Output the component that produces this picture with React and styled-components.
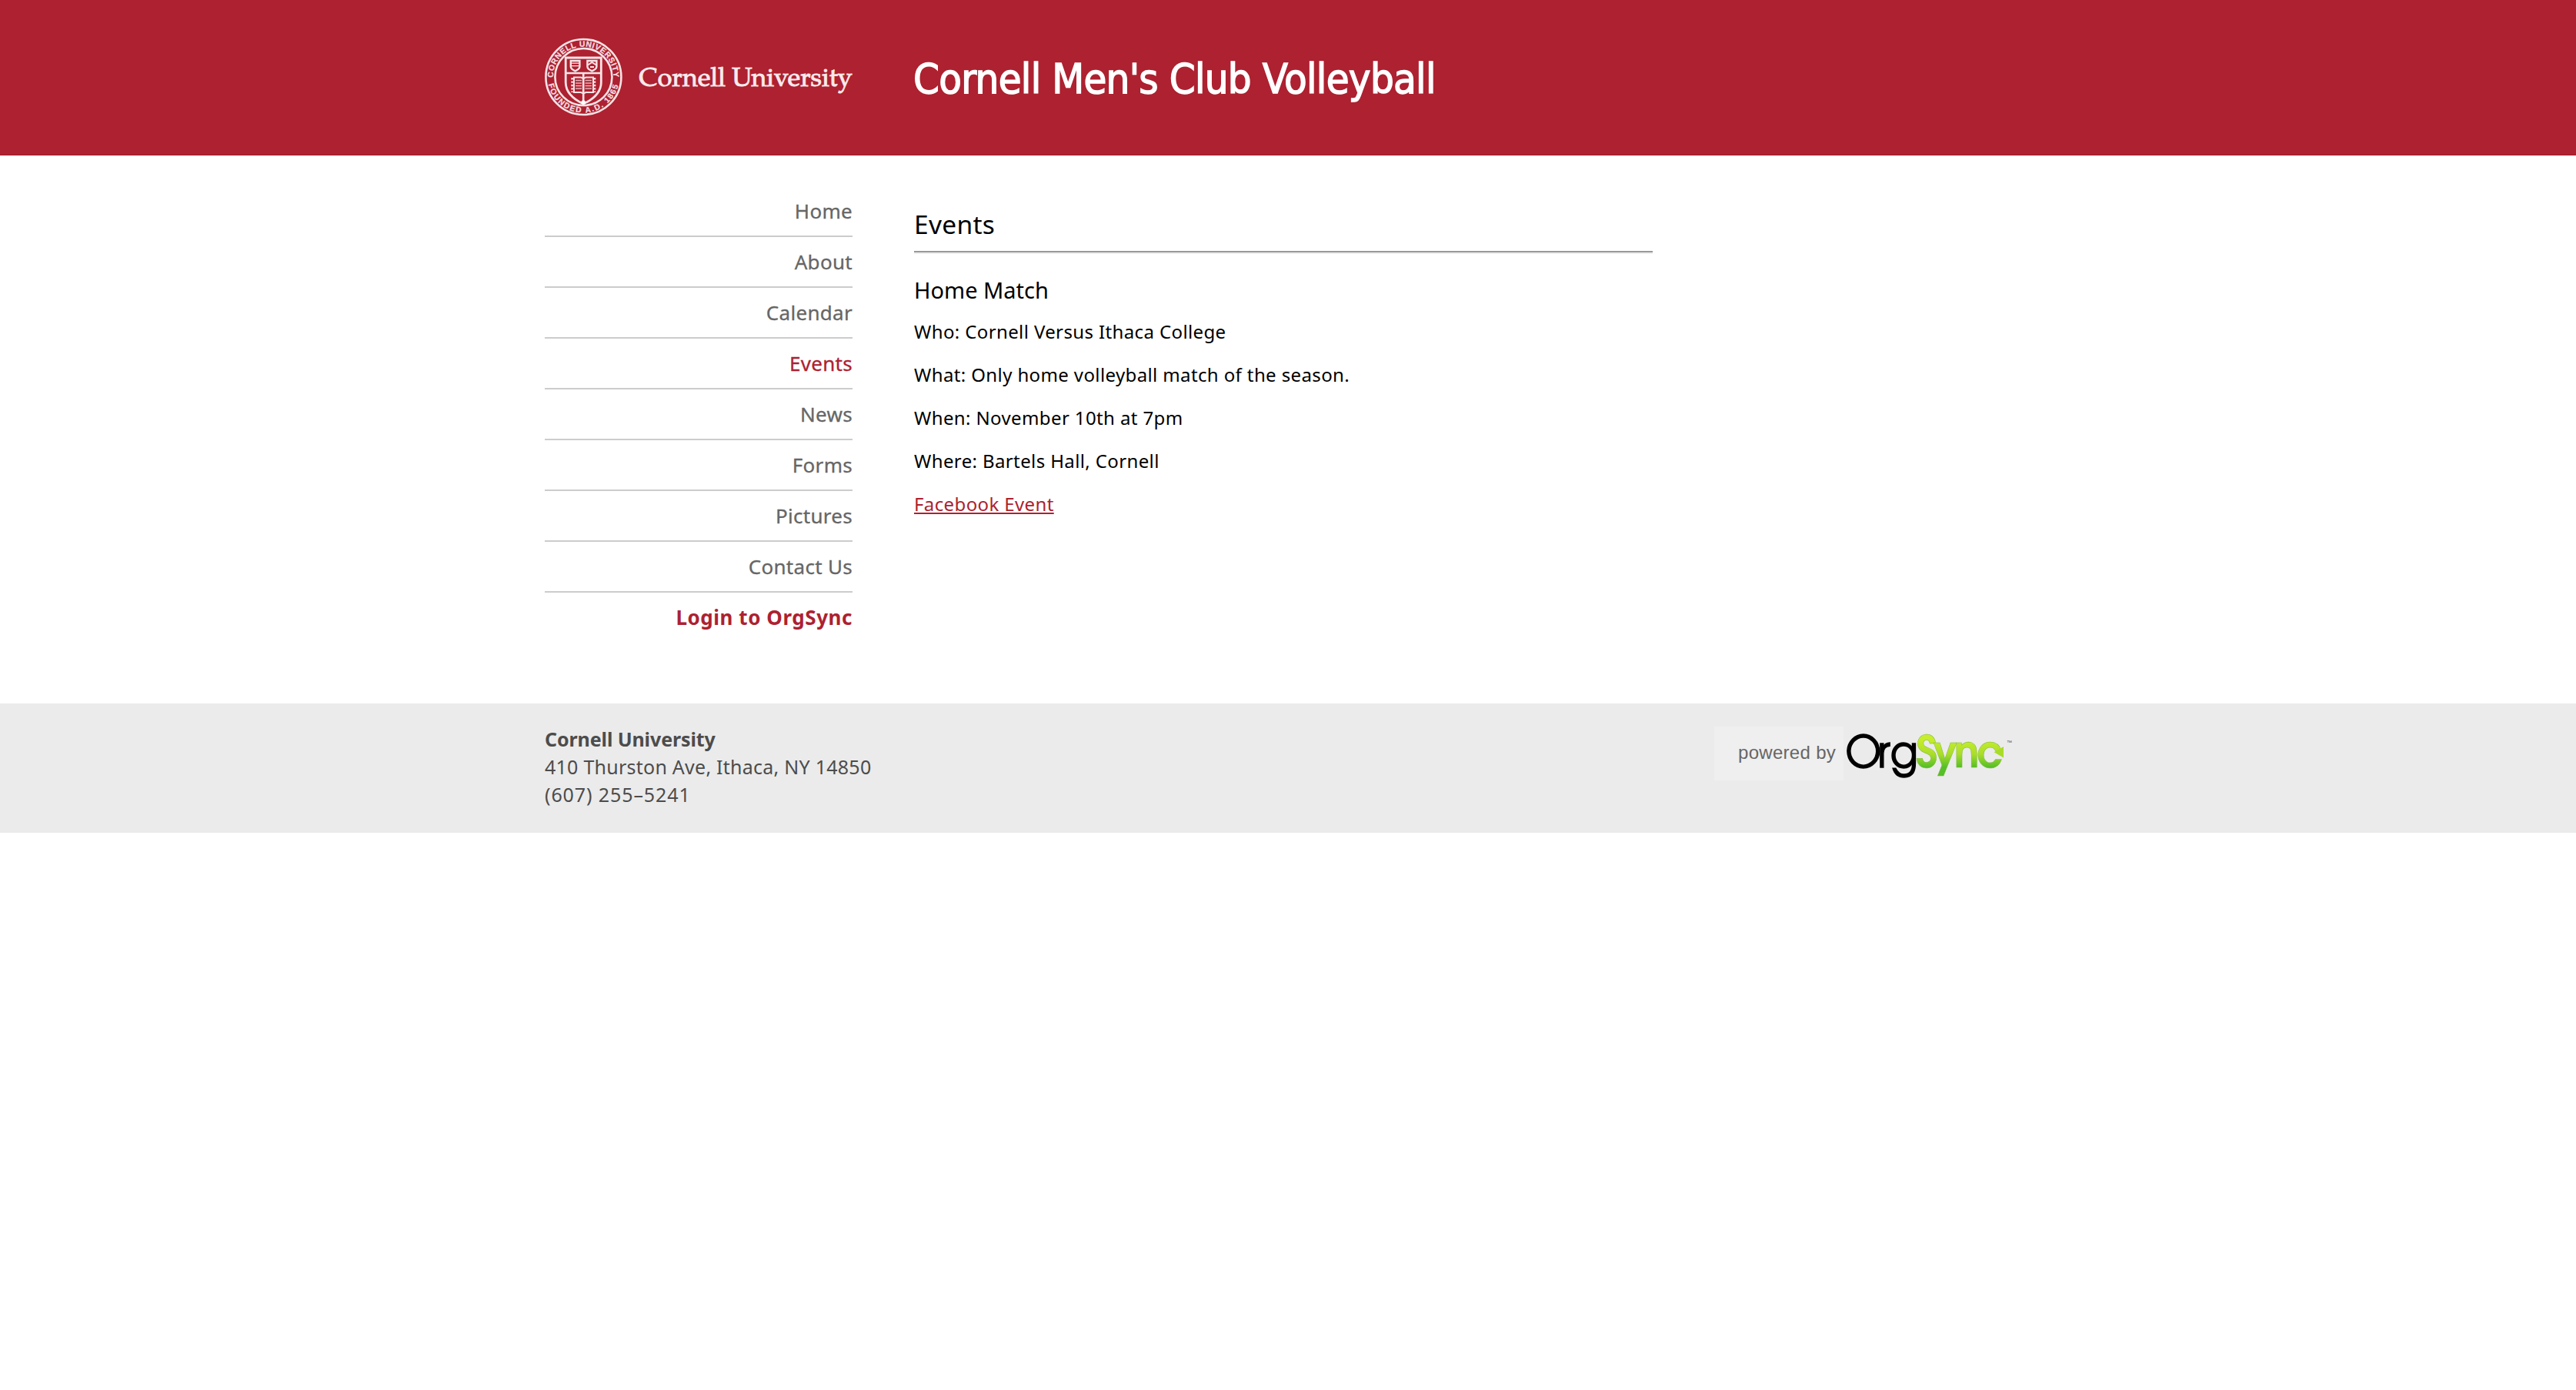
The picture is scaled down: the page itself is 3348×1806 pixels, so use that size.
import React from "react";
import styled, { createGlobalStyle } from "styled-components";

const RED = "#ad2130";

const GlobalStyle = createGlobalStyle`
  body {
    margin: 0;
    background: #fff;
    color: #000;
    font-family: "Noto Sans", "Open Sans", sans-serif;
  }
`;

const Container = styled.div`
  display: flex;
  align-items: flex-start;
  width: 1932px;
  margin: 0 auto;
`;

const Header = styled.header`
  box-sizing: border-box;
  height: 202px;
  background: ${RED};
  border-bottom: 1px solid #a01c2b;
`;

const LogoLink = styled.a`
  display: block;
  width: 400px;
  height: 104px;
  margin-top: 48px;
  margin-right: 80px;
`;

const LogoSvg = styled.svg`
  display: block;
  overflow: visible;
`;

const SiteTitle = styled.h1`
  margin: 63px 0 0 -1px;
  color: #fff;
  font: 400 54px/80px "DejaVu Sans Condensed", "DejaVu Sans", sans-serif;
  letter-spacing: -0.7px;
  -webkit-text-stroke: 1.4px #fff;
  white-space: nowrap;
`;

const Main = styled.main`
  box-sizing: border-box;
  height: 712px;
  padding-top: 40px;
`;

const Nav = styled.nav`
  display: flex;
  flex-direction: column;
  width: 400px;
  margin-right: 80px;
`;

const NavItem = styled.a`
  border-bottom: ${(p) => (p.$login ? "0" : "2px solid #ccc")};
  color: ${(p) => (p.$active || p.$login ? RED : "#666")};
  font-size: 26px;
  font-weight: ${(p) => (p.$login ? 700 : 400)};
  letter-spacing: ${(p) => (p.$login ? "0.55px" : "0.3px")};
  line-height: 64px;
  text-align: right;
  text-decoration: none;
  -webkit-text-stroke: ${(p) => (p.$login ? "0" : "0.3px")};
`;

const Content = styled.section`
  width: 960px;
  padding-top: 29px;
`;

const PageTitle = styled.h2`
  margin: 0;
  font-size: 33.5px;
  font-weight: 400;
  line-height: 40px;
  letter-spacing: 0.3px;
`;

const Rule = styled.hr`
  height: 0;
  margin: 15px 0 27px;
  border: 0;
  border-top: 2px solid #999;
  border-bottom: 2px solid #eee;
`;

const EventTitle = styled.h3`
  margin: 0 0 18px;
  font-size: 29px;
  font-weight: 400;
  line-height: 40px;
`;

const Details = styled.div`
  display: flex;
  flex-direction: column;
  gap: 24px;
`;

const Detail = styled.p`
  margin: 0;
  font-size: 24px;
  line-height: 32px;
  letter-spacing: 0.38px;
`;

const EventLink = styled.a`
  color: ${RED};
  text-decoration: underline;
  text-decoration-thickness: 2px;
  text-underline-offset: 2px;
  text-decoration-skip-ink: none;
`;

const Footer = styled.footer`
  box-sizing: border-box;
  height: 168px;
  padding-top: 28px;
  background: #ebebeb;
`;

const Address = styled.address`
  flex: 1;
  color: #4c4c4c;
  font-size: 25px;
  font-style: normal;
  line-height: 36px;
`;

const AddressLine = styled.span`
  display: block;
  font-weight: ${(p) => (p.$bold ? 700 : 400)};
  letter-spacing: ${(p) => p.$spacing}px;
`;

const PoweredBy = styled.a`
  display: flex;
  width: 412px;
  margin-top: 2px;
  text-decoration: none;
`;

const PoweredLabel = styled.span`
  box-sizing: border-box;
  flex: none;
  width: 168px;
  height: 70px;
  padding-left: 31px;
  background: #efefef;
  color: #666;
  font: 24px/67px "Liberation Sans", Arial, sans-serif;
  letter-spacing: 0.3px;
  white-space: nowrap;
`;

const NAV = ["Home", "About", "Calendar", "Events", "News", "Forms", "Pictures", "Contact Us"];

const DETAILS = [
  "Who: Cornell Versus Ithaca College",
  "What: Only home volleyball match of the season.",
  "When: November 10th at 7pm",
  "Where: Bartels Hall, Cornell",
];

function CornellLogo() {
  return (
    <LogoSvg width="400" height="104" viewBox="708 48 400 104" fill="none" stroke="#f8e4e6">
      <defs>
        <path id="sealTop" d="M719.5 106 A39.2 39.2 0 1 1 796.9 106" />
        <path id="sealBottom" d="M711.7 103 A46.6 46.6 0 0 0 804.7 103" />
      </defs>
      <circle cx="758.4" cy="100" r="49" strokeWidth="2.6" />
      <circle cx="758.4" cy="100" r="37" strokeWidth="2.6" />
      <g fill="#f6dfe1" stroke="#f6dfe1" strokeWidth="0.25" fontFamily='"Liberation Sans", Arial, sans-serif' fontWeight="700" fontSize="10.3">
        <text textAnchor="middle" letterSpacing="0.6">
          <textPath href="#sealTop" startOffset="50%">CORNELL UNIVERSITY</textPath>
        </text>
        <text textAnchor="middle" letterSpacing="1.6">
          <textPath href="#sealBottom" startOffset="50%">FOUNDED A.D. 1865</textPath>
        </text>
      </g>
      <path d="M735.2 75H781.3V107C781.3 120 771 129 758.2 135C745.5 129 735.2 120 735.2 107Z" strokeWidth="2.8" />
      <path d="M735 95H781.5M758.2 95V134" strokeWidth="2.6" />
      <path d="M741.8 79H753.4V86.5C753.4 89.5 750.5 91 747.6 92.3C744.7 91 741.8 89.5 741.8 86.5Z" strokeWidth="2.4" />
      <path d="M742 82.2H753M742 85.6H753" strokeWidth="1.3" />
      <path d="M763.4 79H775.4V86.5C775.4 89.5 772.4 91 769.4 92.3C766.4 91 763.4 89.5 763.4 86.5Z" strokeWidth="2.4" />
      <path d="M764 84.5L769.4 81L775 84.5M767 87H772" strokeWidth="2" />
      <path d="M746 100.5H755L758.2 102L761.5 100.5H771V120H761.5L758.2 121.5L755 120H746Z" strokeWidth="2" />
      <path d="M743.6 101V120M773 101V120" strokeWidth="2.6" strokeDasharray="2.4 2" />
      <path d="M748 104.5H756M748 108H756M748 111.5H756M748 115H756M760.5 104.5H769M760.5 108H769M760.5 111.5H769M760.5 115H769" strokeWidth="1.4" opacity="0.75" />
      <circle cx="758.2" cy="133" r="2.8" fill="#fff" stroke="none" />
      <text
        x="830.6" y="112.3" fill="#faeaec" stroke="#faeaec" strokeWidth="0.9"
        fontFamily='"TeX Gyre Pagella", "Liberation Serif", serif' fontSize="34"
        textLength="277" lengthAdjust="spacing"
      >
        Cornell University
      </text>
    </LogoSvg>
  );
}

function OrgSyncLogo() {
  return (
    <LogoSvg width="240" height="70" viewBox="0 0 240 70">
      <defs>
        <linearGradient id="syncGreen" gradientUnits="userSpaceOnUse" x1="0" y1="12" x2="0" y2="60">
          <stop offset="0.1" stopColor="#c6ee2c" />
          <stop offset="0.5" stopColor="#aadd2a" />
          <stop offset="0.85" stopColor="#55bf27" />
        </linearGradient>
      </defs>
      <g transform="scale(0.94 1)" fontFamily='"TeX Gyre Adventor", Lato, sans-serif' fontSize="57">
        <text x="2.8 47.3 64.5" y="53" fill="#000" stroke="#000" strokeWidth="1.5">Org</text>
        <text x="100.3 124.3 153.2 184.2" y="53" fill="url(#syncGreen)" stroke="#7fb83a" strokeWidth="0.5" fontWeight="700">Sync</text>
      </g>
      <path d="M195.5 33.3L208 26V40.5Z" fill="#a9dc2a" />
      <text x="212" y="23" fontFamily='"Liberation Sans", Arial, sans-serif' fontSize="7" fill="#555">™</text>
    </LogoSvg>
  );
}

export default function App() {
  return (
    <>
      <GlobalStyle />
      <Header>
        <Container>
          <LogoLink aria-label="Cornell University"><CornellLogo /></LogoLink>
          <SiteTitle>Cornell Men's Club Volleyball</SiteTitle>
        </Container>
      </Header>
      <Main>
        <Container>
          <Nav>
            {NAV.map((label) => (
              <NavItem key={label} href="#" $active={label === "Events"}>{label}</NavItem>
            ))}
            <NavItem href="#" $login>Login to OrgSync</NavItem>
          </Nav>
          <Content>
            <PageTitle>Events</PageTitle>
            <Rule />
            <EventTitle>Home Match</EventTitle>
            <Details>
              {DETAILS.map((line) => <Detail key={line}>{line}</Detail>)}
              <Detail><EventLink href="#">Facebook Event</EventLink></Detail>
            </Details>
          </Content>
        </Container>
      </Main>
      <Footer>
        <Container>
          <Address>
            <AddressLine $bold $spacing={-0.1}>Cornell University</AddressLine>
            <AddressLine $spacing={0.25}>410 Thurston Ave, Ithaca, NY 14850</AddressLine>
            <AddressLine $spacing={0.9}>(607) 255–5241</AddressLine>
          </Address>
          <PoweredBy>
            <PoweredLabel>powered by</PoweredLabel>
            <OrgSyncLogo />
          </PoweredBy>
        </Container>
      </Footer>
    </>
  );
}
